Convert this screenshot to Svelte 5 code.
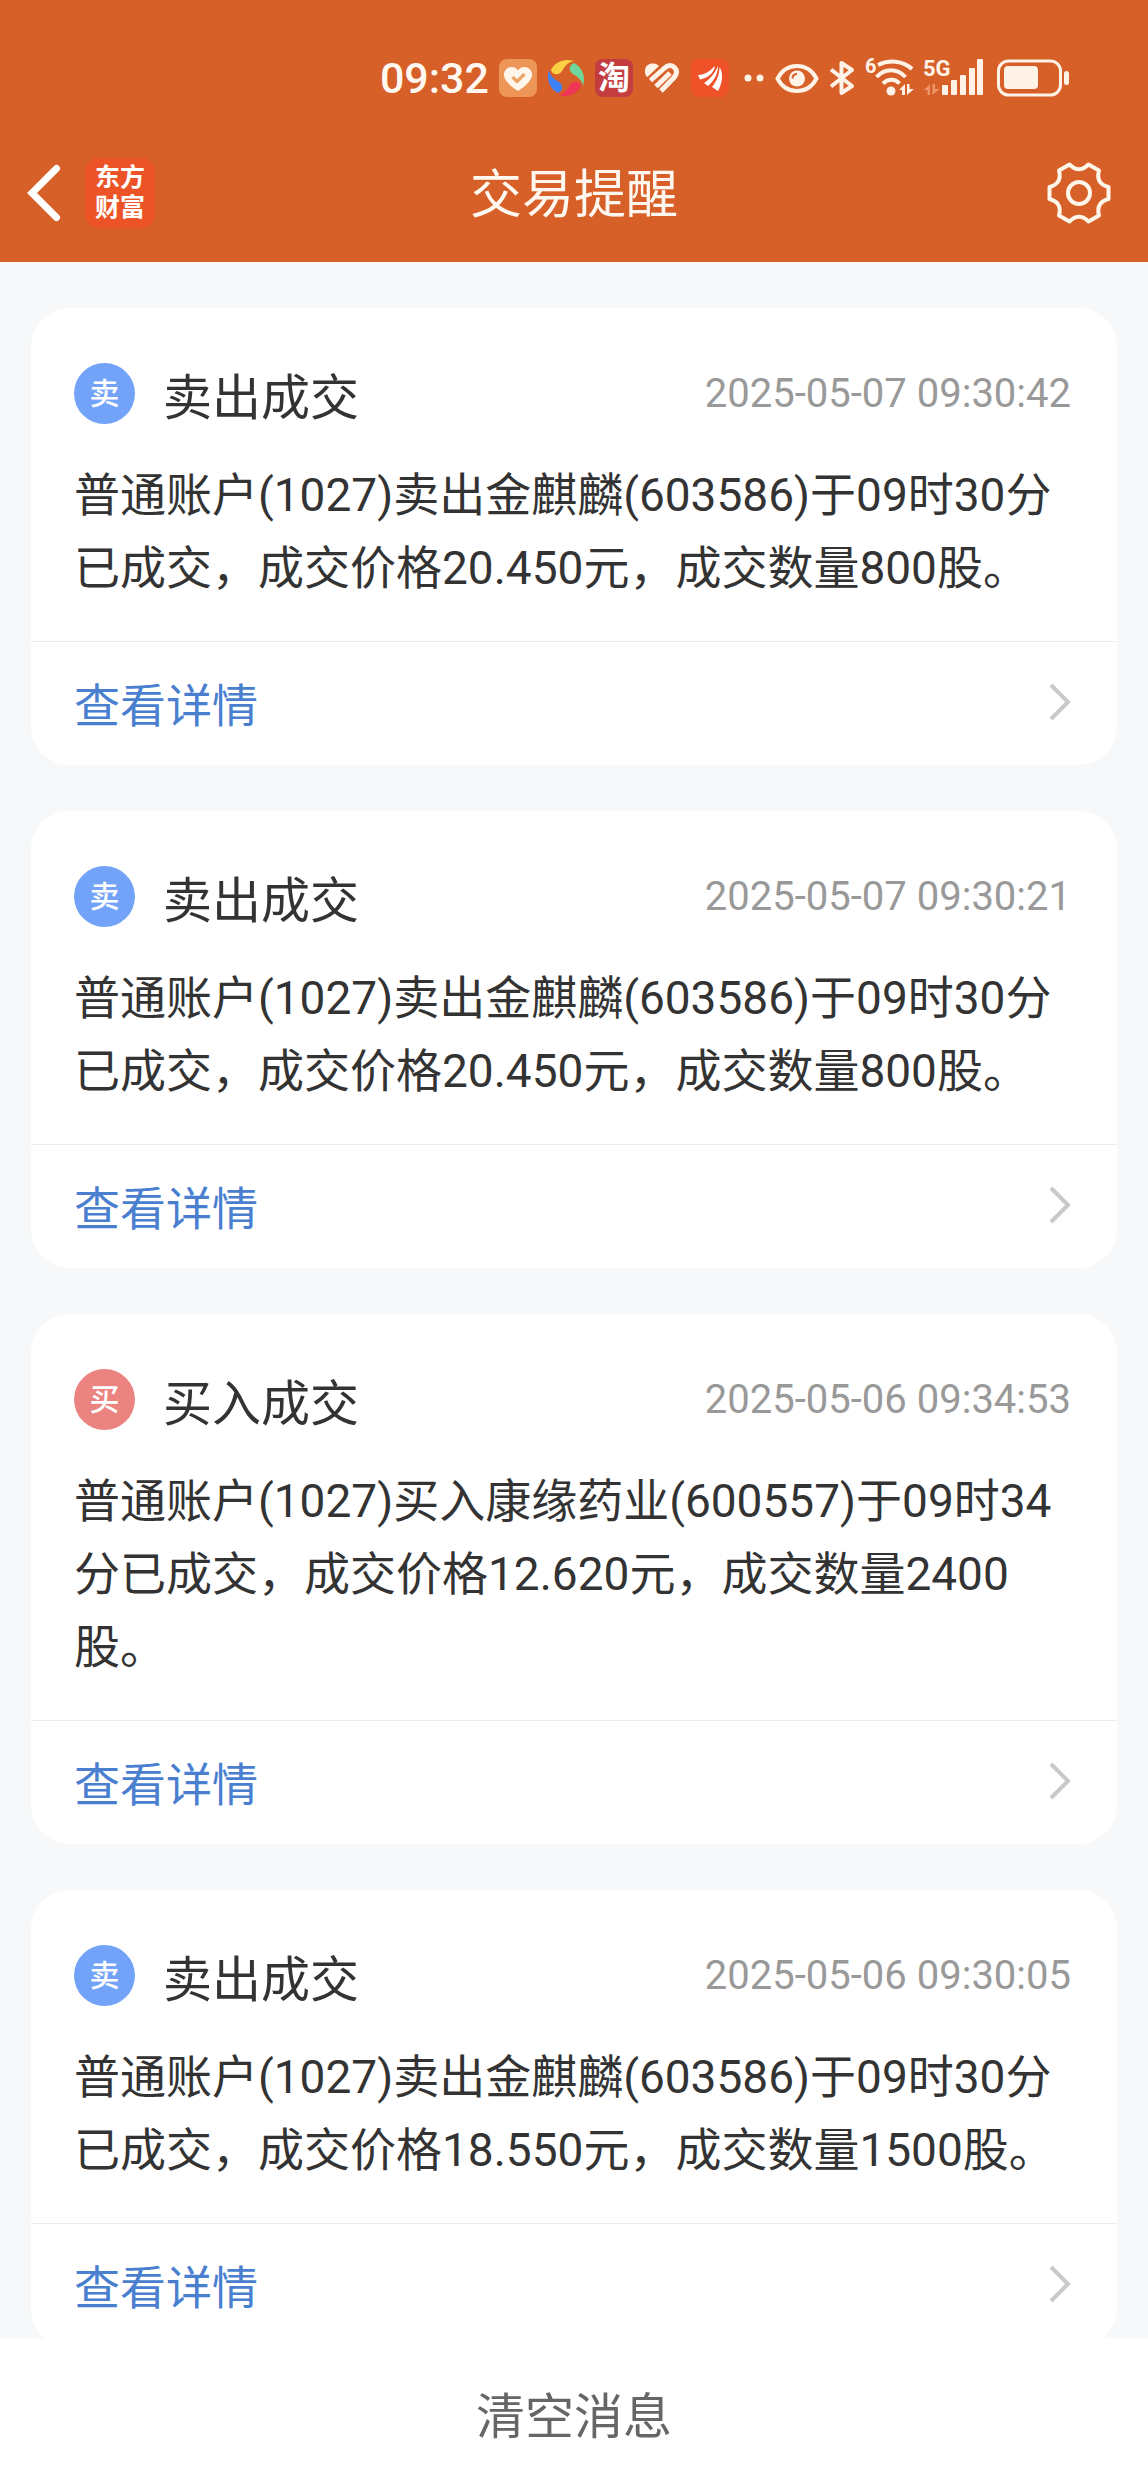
<script lang="ts">
	type Side = 'sell' | 'buy';

	interface Message {
		side: Side;
		title: string;
		time: string;
		text: string;
	}

	const badges: Record<Side, string> = { sell: '卖', buy: '买' };

	let messages: Message[] = $state([
		{
			side: 'sell',
			title: '卖出成交',
			time: '2025-05-07 09:30:42',
			text: '普通账户(1027)卖出金麒麟(603586)于09时30分已成交，成交价格20.450元，成交数量800股。'
		},
		{
			side: 'sell',
			title: '卖出成交',
			time: '2025-05-07 09:30:21',
			text: '普通账户(1027)卖出金麒麟(603586)于09时30分已成交，成交价格20.450元，成交数量800股。'
		},
		{
			side: 'buy',
			title: '买入成交',
			time: '2025-05-06 09:34:53',
			text: '普通账户(1027)买入康缘药业(600557)于09时34分已成交，成交价格12.620元，成交数量2400股。'
		},
		{
			side: 'sell',
			title: '卖出成交',
			time: '2025-05-06 09:30:05',
			text: '普通账户(1027)卖出金麒麟(603586)于09时30分已成交，成交价格18.550元，成交数量1500股。'
		}
	]);
</script>

<div class="app">
	<header>
		<div class="status-bar">
			<span class="clock">09:32</span>

			<svg width="38" height="38" viewBox="0 0 38 38">
				<rect width="38" height="38" rx="8" fill="#ed9658" />
				<path
					d="M19 32C10 26 5 21 5 15.500C5 11 8.500 8 12.500 8C15.500 8 17.700 9.500 19 11.500C20.300 9.500 22.500 8 25.500 8C29.500 8 33 11 33 15.500C33 21 28 26 19 32Z"
					fill="#fff6ec"
				/>
				<path d="M13.500 18L18 22.500L25.500 15" fill="none" stroke="#eda468" stroke-width="3.200" />
			</svg>

			<svg width="38" height="38" viewBox="0 0 38 38">
				{#each ['#fbd044', '#6fd79b', '#ee3556', '#3e82f7'] as fill, i}
					<path
						d="M4 11C8 3 17 -1 27 2C21 3 18 7 15 12C12 16.500 6 16.500 4 11Z"
						{fill}
						transform="rotate({i * 90} 19 19)"
					/>
				{/each}
			</svg>

			<span class="tao">淘</span>

			<svg width="38" height="38" viewBox="0 0 38 38" fill="none" stroke="#fff3e8" stroke-width="5">
				<path d="M2 14C1 8 5 4.500 9 4.500C12 4.500 14 5 16 7L4.500 18C3 17 2.500 15.500 2 14Z" fill="#fff3e8" stroke="none" />
				<path d="M7.500 21.500L21 9.500C25 5.500 29 6 31.500 8.500C34.500 11.500 34 15 31 18.500L18 32" />
				<path d="M13 27.500L27 14" />
			</svg>

			<svg width="38" height="38" viewBox="0 0 38 38">
				<rect width="38" height="38" rx="8" fill="#ef5128" />
				<path
					d="M7 16C13 16 18 13 24 7C23 14 17 19 9 20.500ZM13 24C19 20 24 14 27 7C27 15 23 22 17 27ZM21 28C26 22 28.500 15 28.500 8C33 15 31 25 27 32Z"
					fill="#fff"
				/>
			</svg>

			<svg width="26" height="38" viewBox="0 0 26 38" fill="#fff3e8">
				<circle cx="9" cy="19" r="3.500" />
				<circle cx="21" cy="19" r="3.500" />
			</svg>

			<svg width="44" height="38" viewBox="0 0 44 38">
				<path
					d="M2.500 19.500C7 11 14 7 22 7C30 7 37 11 41.500 19.500C37 28 30 32 22 32C14 32 7 28 2.500 19.500Z"
					fill="none"
					stroke="#fff3e8"
					stroke-width="4"
				/>
				<circle cx="22" cy="19.500" r="8" fill="#fff3e8" />
				<path d="M17.500 19.500C17.500 16.500 19.500 15 22 15" fill="none" stroke="#d75f28" stroke-width="2" />
			</svg>

			<svg width="26" height="38" viewBox="0 0 26 38">
				<path
					d="M2 10.500L23 27L12.500 34V4L23 11L2 27.500"
					fill="none"
					stroke="#fff3e8"
					stroke-width="4"
					stroke-linejoin="round"
				/>
			</svg>

			<svg width="49" height="38" viewBox="0 0 49 38">
				<text class="net-label" x="0" y="14" font-size="20">6</text>
				<g fill="none" stroke="#fff3e8" stroke-width="4">
					<path d="M13 6C24 0.500 38 1.500 47 10" />
					<path d="M11.500 18C20 9 32 9 40.500 18" />
					<path d="M18 24.500C23 19.500 30 19.500 34.500 24.500" />
				</g>
				<circle cx="26" cy="32" r="4.500" fill="#fff3e8" />
				<path d="M34 31L40 25V36H37V31ZM42 25H44.500V30H49L42 36Z" fill="#fff3e8" />
			</svg>

			<svg width="63" height="38" viewBox="0 0 63 38" fill="#fff3e8">
				<text class="net-label" x="-1" y="17" font-size="22">5G</text>
				<path d="M0 31L6 25V36H3.500V31ZM8.500 25H11V30H15.500L8.500 36Z" fill="#ef9468" />
				<rect x="18" y="26" width="6" height="10" rx="1" />
				<rect x="27" y="21" width="6" height="15" rx="1" />
				<rect x="36" y="16" width="6" height="20" rx="1" />
				<rect x="45" y="9" width="6" height="27" rx="1" />
				<rect x="53" y="0" width="6" height="36" rx="1" />
			</svg>

			<svg width="73" height="38" viewBox="0 0 73 38">
				<rect x="1.500" y="2" width="62" height="34" rx="10" fill="none" stroke="#fff3e8" stroke-width="3" />
				<rect x="7" y="7" width="34" height="23" rx="4" fill="#fff3e8" />
				<rect x="67" y="12" width="5" height="14" rx="2.500" fill="#fff3e8" />
			</svg>
		</div>

		<nav class="nav-bar">
			<div class="nav-left">
				<button class="icon-button" aria-label="返回">
					<svg width="34" height="58" viewBox="0 0 34 58">
						<path
							d="M29.500 4.500L5 29L29.500 53.500"
							fill="none"
							stroke="#fff"
							stroke-width="7"
							stroke-linecap="round"
						/>
					</svg>
				</button>
				<span class="logo">东方<br />财富</span>
			</div>
			<h1>交易提醒</h1>
			<button class="icon-button settings" aria-label="设置">
				<svg width="64" height="64" viewBox="0 0 64 64" fill="none" stroke="#fff6ea" stroke-width="4">
					<path
						d="M61.500 26L61.500 38Q48.500 41.500 52 54.500L41.500 60.500Q32 51 22.500 60.500L12 54.500Q15.500 41.500 2.500 38L2.500 26Q15.500 22.500 12 9.500L22.500 3.500Q32 13 41.500 3.500L52 9.500Q48.500 22.500 61.500 26Z"
						stroke-linejoin="round"
					/>
					<circle cx="32" cy="32" r="11" />
				</svg>
			</button>
		</nav>
	</header>

	<main class="list">
		{#each messages as message}
			<article class="card">
				<div class="card-body">
					<div class="card-head">
						<span class="badge {message.side}">{badges[message.side]}</span>
						<h2>{message.title}</h2>
						<time>{message.time}</time>
					</div>
					<p>{message.text}</p>
				</div>
				<a class="detail" href="#detail">
					查看详情
					<svg width="24" height="40" viewBox="0 0 24 40">
						<path d="M3 3L20 20L3 37" fill="none" stroke="#c9c9c9" stroke-width="4" />
					</svg>
				</a>
			</article>
		{/each}
	</main>

	<button class="clear" onclick={() => (messages = [])}>清空消息</button>
</div>

<style>
	:global(body) {
		background: #f6f8fa;
	}

	.app {
		display: flex;
		flex-direction: column;
		height: 100vh;

		font-family: Roboto, 'Noto Sans CJK SC', sans-serif;
		color: #333;
	}

	svg {
		display: block;
		flex-shrink: 0;
		overflow: visible;
	}

	button {
		padding: 0;
		border: none;

		font-family: inherit;
		background: none;

		cursor: pointer;
	}

	header {
		flex-shrink: 0;

		background: #d75f28;
		color: #fff8f0;
	}

	.status-bar {
		display: flex;
		justify-content: flex-end;
		align-items: center;
		gap: 10px;

		box-sizing: border-box;
		height: 124px;
		padding: 32px 78px 0 0;
	}

	.clock {
		font-size: 43px;
		font-weight: 500;
		line-height: 48px;
	}

	.tao {
		width: 38px;

		font-size: 32px;
		font-weight: 700;
		line-height: 38px;
		text-align: center;

		background: #c33c3f;
		color: #fff;

		border-radius: 8px;
	}

	.net-label {
		font-weight: 700;
		fill: #fff3e8;
	}

	.nav-bar {
		display: grid;
		grid-template-columns: 1fr auto 1fr;
		align-items: center;

		height: 138px;
		padding: 0 27px;
	}

	.nav-left {
		display: flex;
		align-items: center;
		gap: 24px;
	}

	.logo {
		padding: 5px 10px;

		font-size: 25px;
		font-weight: 700;
		line-height: 30px;

		background: #ec5428;
		color: #fff;

		border-radius: 14px;
	}

	h1 {
		margin: 0;
		padding-top: 6px;

		font-size: 52px;
		font-weight: 400;
		line-height: 72px;
	}

	.settings {
		justify-self: end;
		padding-right: 10px;
	}

	.list {
		display: flex;
		flex: 1;
		flex-direction: column;
		gap: 46px;

		min-height: 0;
		padding: 46px 31px;

		overflow-y: auto;
		scrollbar-width: none;
	}

	.card {
		flex-shrink: 0;

		background: #fff;

		border-radius: 38px;
	}

	.card-body {
		padding: 49px 46px 36px 43px;
	}

	.card-head {
		display: flex;
		align-items: center;

		height: 73px;
		margin-bottom: 29px;
	}

	.badge {
		width: 61px;

		font-size: 30px;
		font-weight: 500;
		line-height: 61px;
		text-align: center;

		color: #fff;

		border-radius: 50%;
	}

	.sell {
		background: #72a3f8;
	}

	.buy {
		background: #eb8380;
	}

	h2 {
		margin: 0 0 0 28px;

		font-size: 49px;
		font-weight: 400;
	}

	time {
		margin-left: auto;

		font-size: 40px;

		color: #999;
	}

	p {
		margin: 0;

		font-size: 46px;
		line-height: 73px;
	}

	.detail {
		display: flex;
		justify-content: space-between;
		align-items: center;

		height: 119px;
		padding: 0 45px 4px 43px;

		font-size: 46px;
		color: #4a7fd0;
		text-decoration: none;

		border-top: 1px solid #ececec;
	}

	.clear {
		flex-shrink: 0;

		height: 154px;
		padding-bottom: 6px;

		font-size: 49px;

		background: #fff;
		color: #666;
	}
</style>
